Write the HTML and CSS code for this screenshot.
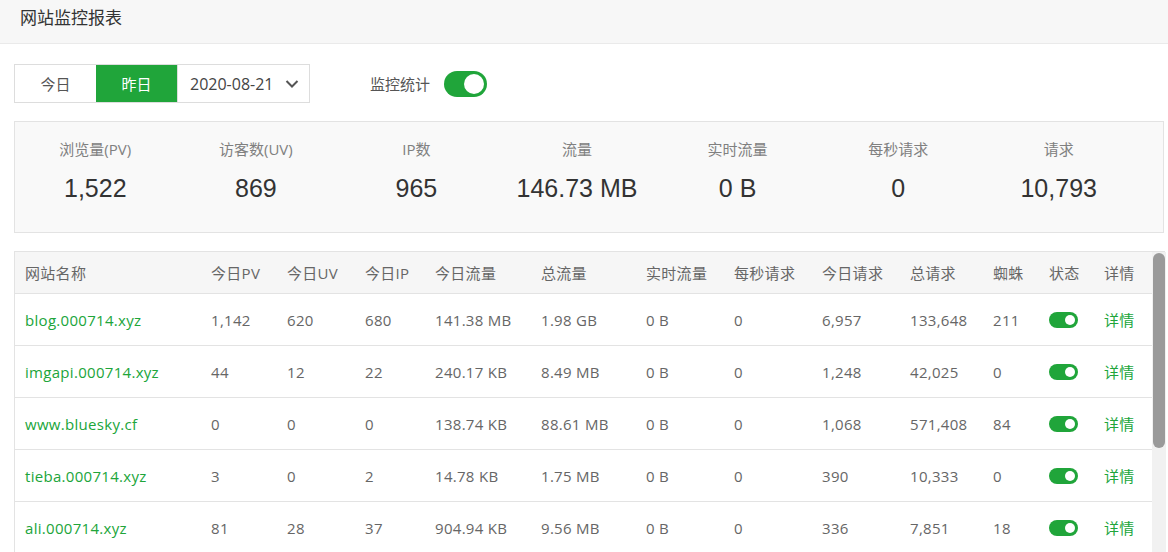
FILE: index.html
```html
<!DOCTYPE html>
<html lang="zh">
<head>
<meta charset="utf-8">
<title>网站监控报表</title>
<link rel="stylesheet" href="styles.css">
</head>
<body>
<div class="page">
  <header class="top">网站监控报表</header>
  <div class="toolbar">
    <div class="seg">
      <span class="seg-btn">今日</span>
      <span class="seg-btn active">昨日</span>
      <span class="seg-date">2020-08-21
        <svg class="chev" width="14" height="10" viewBox="0 0 14 10"><path d="M1.5 2 L7 7.5 L12.5 2" fill="none" stroke="#555" stroke-width="2"/></svg>
      </span>
    </div>
    <div class="monitor">
      <span>监控统计</span>
      <span class="switch big"><span class="knob"></span></span>
    </div>
  </div>
  <div class="stats">
    <div class="stat"><div class="lbl">浏览量(PV)</div><div class="val">1,522</div></div>
    <div class="stat"><div class="lbl">访客数(UV)</div><div class="val">869</div></div>
    <div class="stat"><div class="lbl">IP数</div><div class="val">965</div></div>
    <div class="stat"><div class="lbl">流量</div><div class="val">146.73 MB</div></div>
    <div class="stat"><div class="lbl">实时流量</div><div class="val">0 B</div></div>
    <div class="stat"><div class="lbl">每秒请求</div><div class="val">0</div></div>
    <div class="stat"><div class="lbl">请求</div><div class="val">10,793</div></div>
  </div>
  <div class="tablebox">
    <div class="grid" role="table">
      <div class="row head" role="row">
        <span role="columnheader">网站名称</span><span role="columnheader">今日PV</span><span role="columnheader">今日UV</span><span role="columnheader">今日IP</span><span role="columnheader">今日流量</span><span role="columnheader">总流量</span><span role="columnheader">实时流量</span><span role="columnheader">每秒请求</span><span role="columnheader">今日请求</span><span role="columnheader">总请求</span><span role="columnheader">蜘蛛</span><span role="columnheader">状态</span><span role="columnheader">详情</span>
      </div>
      <div class="row" role="row">
        <span class="link">blog.000714.xyz</span><span>1,142</span><span>620</span><span>680</span><span>141.38 MB</span><span>1.98 GB</span><span>0 B</span><span>0</span><span>6,957</span><span>133,648</span><span>211</span><span><i class="switch"><i class="knob"></i></i></span><span class="link">详情</span>
      </div>
      <div class="row" role="row">
        <span class="link">imgapi.000714.xyz</span><span>44</span><span>12</span><span>22</span><span>240.17 KB</span><span>8.49 MB</span><span>0 B</span><span>0</span><span>1,248</span><span>42,025</span><span>0</span><span><i class="switch"><i class="knob"></i></i></span><span class="link">详情</span>
      </div>
      <div class="row" role="row">
        <span class="link">www.bluesky.cf</span><span>0</span><span>0</span><span>0</span><span>138.74 KB</span><span>88.61 MB</span><span>0 B</span><span>0</span><span>1,068</span><span>571,408</span><span>84</span><span><i class="switch"><i class="knob"></i></i></span><span class="link">详情</span>
      </div>
      <div class="row" role="row">
        <span class="link">tieba.000714.xyz</span><span>3</span><span>0</span><span>2</span><span>14.78 KB</span><span>1.75 MB</span><span>0 B</span><span>0</span><span>390</span><span>10,333</span><span>0</span><span><i class="switch"><i class="knob"></i></i></span><span class="link">详情</span>
      </div>
      <div class="row" role="row">
        <span class="link">ali.000714.xyz</span><span>81</span><span>28</span><span>37</span><span>904.94 KB</span><span>9.56 MB</span><span>0 B</span><span>0</span><span>336</span><span>7,851</span><span>18</span><span><i class="switch"><i class="knob"></i></i></span><span class="link">详情</span>
      </div>
    </div>
    <div class="scrollbar"><div class="thumb"></div></div>
  </div>
</div>
</body>
</html>
```
FILE: styles.css
```css
* { box-sizing: border-box; }
html, body { margin: 0; padding: 0; background: #fff; }
body {
  font-family: "Open Sans", "Noto Sans CJK SC", sans-serif;
  font-size: 15px;
  color: #666;
  overflow: hidden;
  height: 552px;
}
.page { width: 1168px; }
.top {
  height: 44px;
  background: #f7f7f7;
  border-bottom: 1px solid #eaeaea;
  padding: 6px 0 0 20px;
  font-size: 17px;
  color: #333;
  line-height: 24px;
}
.toolbar {
  display: flex;
  align-items: center;
  padding: 20px 14px 18px 14px;
}
.seg {
  display: flex;
  height: 39px;
  border: 1px solid #ddd;
}
.seg-btn {
  display: flex; align-items: center; justify-content: center;
  width: 81px;
  color: #555;
  background: #fff;
}
.seg-btn.active { background: #20a53a; color: #fff; width: 81px; }
.seg-date {
  display: flex; align-items: center; justify-content: space-between;
  width: 132px;
  padding: 0 10px 0 12px;
  border-left: 1px solid #ddd;
  color: #444;
  font-size: 16px;
}
.chev { margin-top: 1px; }
.monitor {
  display: flex; align-items: center; gap: 14px;
  margin-left: 60px;
  color: #555;
}
.switch {
  display: inline-flex; align-items: center; justify-content: flex-end;
  width: 29px; height: 16px;
  border-radius: 8px;
  background: #20a53a;
  padding: 0 3px;
}
.switch .knob { display: block; width: 10px; height: 10px; border-radius: 50%; background: #fff; }
.switch.big { width: 43px; height: 26px; border-radius: 13px; padding: 0 3px; }
.switch.big .knob { width: 20px; height: 20px; }
.stats {
  display: grid;
  grid-template-columns: repeat(7, 1fr);
  margin: 0 4px 0 14px;
  height: 112px;
  background: #f9f9f9;
  border: 1px solid #e3e3e3;
  padding: 16px 24px 0 0;
}
.stat { text-align: center; }
.lbl { font-size: 15px; color: #808080; line-height: 22px; }
.val {
  font-family: "Liberation Sans", Arial, sans-serif;
  font-size: 25px; color: #333; line-height: 30px; margin-top: 13px;
}
.tablebox {
  display: flex;
  margin: 18px 3px 0 14px;
  border-top: 1px solid #e3e3e3;
  border-left: 1px solid #e3e3e3;
  height: 320px;
}
.grid { width: 1137px; flex: none; letter-spacing: 0.3px; }
.row {
  display: grid;
  grid-template-columns: 186px 76px 78px 70px 106px 105px 88px 88px 88px 83px 56px 55px 57px;
  align-items: center;
  height: 52px;
  border-bottom: 1px solid #e3e3e3;
  color: #666;
}
.row > span { padding-left: 10px; white-space: nowrap; line-height: 20px; display: flex; align-items: center; }
.row.head { height: 42px; background: #f6f6f6; }
.row .link { color: #20a53a; }
.scrollbar {
  width: 14px; flex: none;
  background: #f1f1f1;
  padding: 1px 1px 0 1px;
}
.thumb { height: 195px; background: #9a9a9a; border-radius: 6px; }
```
